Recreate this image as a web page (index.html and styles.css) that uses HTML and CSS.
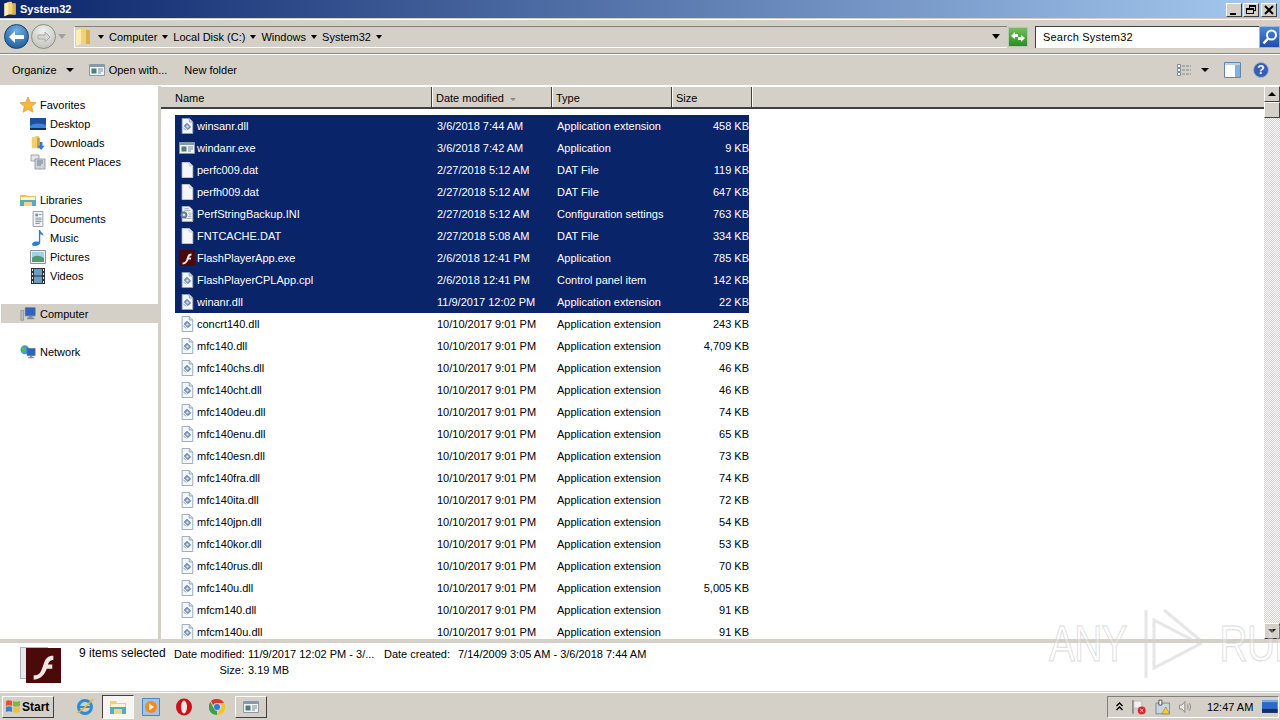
FILE: index.html
```html
<!DOCTYPE html>
<html lang="en">
<head>
  <meta charset="UTF-8">
  <title>System32</title>
  <link rel="stylesheet" href="styles.css">
</head>
<body>

  <svg class="defs" width="0" height="0">
    <symbol id="folder" viewBox="0 0 16 20">
      <path d="M1 3l6-2h3l1 2h4v14H5l-4 2z" fill="#f0d27a"/>
      <path d="M1 3l5-1v15l-5 2z" fill="#fbeeb0"/>
      <path d="M11 3h4v14h-4z" fill="#d9b04a"/>
    </symbol>
    <symbol id="dll" viewBox="0 0 16 18">
      <path d="M2.5.5h8l4 4v13h-12z" fill="#f4f7fb" stroke="#8fa0b4"/>
      <path d="M10.500.5v4h4" fill="#d5dde8" stroke="#8fa0b4"/>
      <path d="M5 9l3-3 4 4-3 3z" fill="#8aa4c8" stroke="#4c6a94"/>
      <circle cx="8.500" cy="9.500" r="1.200" fill="#e8eef6"/>
      <path d="M4 11l3 3" stroke="#6a86ac"/>
    </symbol>
    <symbol id="dat" viewBox="0 0 16 18">
      <path d="M2.500.5h8l4 4v13h-12z" fill="#f6f6f6" stroke="#c8ccd2"/>
      <path d="M10.500.5v4h4" fill="#dfe2e6" stroke="#c8ccd2"/>
    </symbol>
    <symbol id="exe" viewBox="0 0 16 14">
      <path d="M.5 1.500h15v11H.5z" fill="#f2f5f8" stroke="#8a98a6"/>
      <path d="M1 2h14v2H1z" fill="#7f9ab4"/>
      <path d="M2.500 5.500h5v5h-5z" fill="#4f7d78"/>
      <path d="M9 6h5M9 8h5M9 10h3" stroke="#7a8a98"/>
    </symbol>
    <symbol id="ini" viewBox="0 0 16 18">
      <path d="M2.500.5h8l4 4v13h-12z" fill="#f4f6f8" stroke="#aab2bc"/>
      <path d="M5 3h5M5 5h7M9 8h4M10 10h3M9 12h4M5 14h8" stroke="#9aa4b0"/>
      <circle cx="4.500" cy="10" r="3.500" fill="#7c8ea6" stroke="#56667c"/>
      <circle cx="4.500" cy="10" r="1.300" fill="#e6ebf1"/>
    </symbol>
    <symbol id="flash" viewBox="0 0 16 16">
      <path d="M0 0h16v16H0z" fill="#4b0a0a"/>
      <path d="M3.500 12.500c3 0 3.500-2 4.500-5s2-4 4.500-4v2c-1.500 0-2 1-2.500 2h2v2H9.500c-1 2.500-2.500 4.800-6 5z" fill="#f2e6e2"/>
    </symbol>
    <symbol id="star" viewBox="0 0 16 16">
      <path d="M8 0l2.300 5.300 5.700.5-4.300 3.800 1.300 5.600L8 12.300l-5 2.900 1.300-5.600L0 5.800l5.700-.5z" fill="#f6b73c" stroke="#d98a1e" stroke-width=".6"/>
    </symbol>
    <symbol id="desktop" viewBox="0 0 16 14">
      <path d="M0 1h16v12H0z" fill="#1d4f9c"/>
      <path d="M0 9c4-3 10-3 16-1v5H0z" fill="#3f86d8"/>
      <path d="M0 11h16v2H0z" fill="#16305e"/>
    </symbol>
    <symbol id="downloads" viewBox="0 0 16 18">
      <path d="M1 3l5-2h3v14H1z" fill="#f0cf6c"/>
      <path d="M7 3h3v12H7z" fill="#c99c36"/>
      <path d="M10 8h3v4h2.500l-4 5-4-5H10z" fill="#2f78d0"/>
    </symbol>
    <symbol id="recent" viewBox="0 0 16 16">
      <path d="M1 1h8v6H1z" fill="#e2e5e9" stroke="#8f979f" stroke-width=".8"/>
      <path d="M5 5h10v10H5z" fill="#cfd4da" stroke="#858d96" stroke-width=".8"/>
      <path d="M7 7h6M7 9h6M7 11h4" stroke="#6f7882"/>
    </symbol>
    <symbol id="libraries" viewBox="0 0 16 14">
      <path d="M0 2h6l1 1h9v10H0z" fill="#e6c35c"/>
      <path d="M1 4h14v3H1z" fill="#fbf4d0"/>
      <path d="M0 7h16v6H0z" fill="#58a8c8"/>
      <path d="M4 13V9h8v4" fill="#f2d678"/>
    </symbol>
    <symbol id="documents" viewBox="0 0 16 18">
      <path d="M2.500.5h11v17h-11z" fill="#f3f4f6" stroke="#8e959d"/>
      <path d="M5 3h3v3H5z" fill="#7f8b98"/>
      <path d="M9 4h3M5 8h7M5 10h7M5 12h7M5 14h5" stroke="#838b94"/>
    </symbol>
    <symbol id="music" viewBox="0 0 16 18">
      <path d="M9 0h1.500c.5 3 4 3.500 3.500 7-.8-1.500-2-2-3.500-2.200V14c0 2.500-3 4-6 4-3 0-4-2-2.500-3.500 1.500-1.500 4-2 7-1.200z" fill="#2c7fd2"/>
    </symbol>
    <symbol id="pictures" viewBox="0 0 16 14">
      <path d="M.5.500h15v13H.5z" fill="#eef1f4" stroke="#8a929a"/>
      <path d="M2 2h12v7H2z" fill="#a6cfe6"/>
      <path d="M2 8c3-3 7-3 12 0v4H2z" fill="#4e9a72"/>
    </symbol>
    <symbol id="videos" viewBox="0 0 14 16">
      <path d="M0 0h14v16H0z" fill="#2a3138"/>
      <path d="M3 1h8v6.500H3zM3 8.500h8V15H3z" fill="#6a9bc2"/>
      <path d="M1 1h1v2H1zM1 5h1v2H1zM1 9h1v2H1zM1 13h1v2H1zM12 1h1v2h-1zM12 5h1v2h-1zM12 9h1v2h-1zM12 13h1v2h-1z" fill="#e6eaee"/>
    </symbol>
    <symbol id="computer" viewBox="0 0 18 16">
      <path d="M6 1h11v9H6z" fill="#2a62c8" stroke="#5c6a78" stroke-width=".8"/>
      <path d="M10 10h4v2h2v2H8v-2h2z" fill="#7f8b98"/>
      <path d="M1 4h3v11H1z" fill="#b8c0c8" stroke="#6c7680" stroke-width=".6"/>
    </symbol>
    <symbol id="network" viewBox="0 0 18 16">
      <circle cx="5.500" cy="5.500" r="5" fill="#3aa0c8"/>
      <path d="M2 3c2-1 3 0 4 2s-1 3-3 3z" fill="#5cb85c"/>
      <path d="M8 4h9v8H8z" fill="#2a62c8" stroke="#5c6a78" stroke-width=".7"/>
      <path d="M11 12h3v2h2v1H9v-1h2z" fill="#7f8b98"/>
    </symbol>
  </svg>

  <div class="window">
    <div class="title-bar">
      <svg class="title-icon"><use href="#folder"/></svg>
      <span class="title-text">System32</span>
      <div class="win-buttons">
        <button class="win-btn"><svg width="12" height="12" viewBox="0 0 12 12"><path d="M2 9h6v2H2z" fill="#000"/></svg></button>
        <button class="win-btn"><svg width="12" height="12" viewBox="0 0 12 12"><path d="M4 1h7v6H9v3H1V4h3zm1 2v1h4v2h1V3zM2 6v3h6V6z" fill="#000"/></svg></button>
        <button class="win-btn win-btn-close"><svg width="12" height="12" viewBox="0 0 12 12"><path d="M2 2l8 8M10 2l-8 8" stroke="#000" stroke-width="2"/></svg></button>
      </div>
    </div>

    <div class="address-bar">
      <div class="nav-buttons">
        <button class="nav-btn nav-back"><svg width="18" height="14" viewBox="0 0 18 14"><path d="M1 7l6-6v4h9v4H7v4z" fill="#fff"/></svg></button>
        <button class="nav-btn nav-forward"><svg width="14" height="12" viewBox="0 0 14 12"><path d="M13 6L8 1v3H1v4h7v3z" fill="#d6d6d6" stroke="#a8a8a8"/></svg></button>
        <span class="nav-drop"></span>
      </div>
      <div class="breadcrumb">
        <svg class="crumb-folder"><use href="#folder"/></svg>
        <span class="crumb-arrow"></span><span class="crumb">Computer</span>
        <span class="crumb-arrow"></span><span class="crumb">Local Disk (C:)</span>
        <span class="crumb-arrow"></span><span class="crumb">Windows</span>
        <span class="crumb-arrow"></span><span class="crumb">System32</span>
        <span class="crumb-arrow"></span>
        <span class="breadcrumb-drop"></span>
      </div>
      <span class="refresh"><svg width="16" height="14" viewBox="0 0 16 14"><path d="M1 6l4-4v2h3v3H5v2zM15 8l-4 4v-2H8V7h3V5z" fill="#fff"/></svg></span>
      <div class="search">
        <span class="search-box">Search System32</span>
        <span class="search-btn"><svg width="18" height="18" viewBox="0 0 18 18"><circle cx="10.500" cy="7" r="4.500" fill="none" stroke="#fff" stroke-width="2"/><path d="M7 10.500l-4.500 5" stroke="#fff" stroke-width="2.500"/></svg></span>
      </div>
    </div>

    <div class="command-bar">
      <span class="cmd">Organize</span><span class="cmd-arrow"></span>
      <svg class="cmd-icon"><use href="#exe"/></svg>
      <span class="cmd">Open with...</span>
      <span class="cmd cmd-new">New folder</span>
      <div class="cmd-right">
        <svg width="16" height="14" viewBox="0 0 16 14"><path d="M1.500 1.500h3v3h-3zM1.500 5.500h3v3h-3zM1.500 9.500h3v3h-3z" fill="#fff" stroke="#7d8790"/><path d="M6 3h9M6 7h9M6 11h9" stroke="#7d8790" stroke-dasharray="3 1"/></svg>
        <span class="cmd-arrow cmd-arrow-views"></span>
        <svg class="pane-icon" width="17" height="16" viewBox="0 0 17 16"><path d="M.5.500h16v15H.5z" fill="#fff" stroke="#5f87ad"/><path d="M11 1h5v14h-5z" fill="#7fb2dc"/><path d="M1 1h15v2H1z" fill="#b9d2e8"/></svg>
        <svg width="16" height="16" viewBox="0 0 16 16"><circle cx="8" cy="8" r="7.500" fill="#3a5cb8" stroke="#9fb0d8"/><text class="help-mark" x="8" y="12" text-anchor="middle">?</text></svg>
      </div>
    </div>

    <div class="main">
      <nav class="sidebar">
        <div class="nav-group">
          <div class="nav-item nav-head"><svg class="side-icon"><use href="#star"/></svg>Favorites</div>
          <div class="nav-item"><svg class="side-icon"><use href="#desktop"/></svg>Desktop</div>
          <div class="nav-item"><svg class="side-icon"><use href="#downloads"/></svg>Downloads</div>
          <div class="nav-item"><svg class="side-icon"><use href="#recent"/></svg>Recent Places</div>
        </div>
        <div class="nav-group">
          <div class="nav-item nav-head"><svg class="side-icon"><use href="#libraries"/></svg>Libraries</div>
          <div class="nav-item"><svg class="side-icon"><use href="#documents"/></svg>Documents</div>
          <div class="nav-item"><svg class="side-icon"><use href="#music"/></svg>Music</div>
          <div class="nav-item"><svg class="side-icon"><use href="#pictures"/></svg>Pictures</div>
          <div class="nav-item"><svg class="side-icon"><use href="#videos"/></svg>Videos</div>
        </div>
        <div class="nav-group">
          <div class="nav-item nav-head nav-active"><svg class="side-icon"><use href="#computer"/></svg>Computer</div>
        </div>
        <div class="nav-group">
          <div class="nav-item nav-head"><svg class="side-icon"><use href="#network"/></svg>Network</div>
        </div>
      </nav>

      <section class="files">
        <div class="col-header">
          <div class="col col-name">Name</div>
          <div class="col col-date">Date modified<span class="sort-arrow"></span></div>
          <div class="col col-type">Type</div>
          <div class="col col-size">Size</div>
          <div class="col-rest"></div>
        </div>
        <div class="rows">
          <div class="row selected"><svg class="file-icon"><use href="#dll"/></svg><span class="c-name">winsanr.dll</span><span class="c-date">3/6/2018 7:44 AM</span><span class="c-type">Application extension</span><span class="c-size">458 KB</span></div>
          <div class="row selected"><svg class="file-icon"><use href="#exe"/></svg><span class="c-name">windanr.exe</span><span class="c-date">3/6/2018 7:42 AM</span><span class="c-type">Application</span><span class="c-size">9 KB</span></div>
          <div class="row selected"><svg class="file-icon"><use href="#dat"/></svg><span class="c-name">perfc009.dat</span><span class="c-date">2/27/2018 5:12 AM</span><span class="c-type">DAT File</span><span class="c-size">119 KB</span></div>
          <div class="row selected"><svg class="file-icon"><use href="#dat"/></svg><span class="c-name">perfh009.dat</span><span class="c-date">2/27/2018 5:12 AM</span><span class="c-type">DAT File</span><span class="c-size">647 KB</span></div>
          <div class="row selected"><svg class="file-icon"><use href="#ini"/></svg><span class="c-name">PerfStringBackup.INI</span><span class="c-date">2/27/2018 5:12 AM</span><span class="c-type">Configuration settings</span><span class="c-size">763 KB</span></div>
          <div class="row selected"><svg class="file-icon"><use href="#dat"/></svg><span class="c-name">FNTCACHE.DAT</span><span class="c-date">2/27/2018 5:08 AM</span><span class="c-type">DAT File</span><span class="c-size">334 KB</span></div>
          <div class="row selected"><svg class="file-icon"><use href="#flash"/></svg><span class="c-name">FlashPlayerApp.exe</span><span class="c-date">2/6/2018 12:41 PM</span><span class="c-type">Application</span><span class="c-size">785 KB</span></div>
          <div class="row selected"><svg class="file-icon"><use href="#dll"/></svg><span class="c-name">FlashPlayerCPLApp.cpl</span><span class="c-date">2/6/2018 12:41 PM</span><span class="c-type">Control panel item</span><span class="c-size">142 KB</span></div>
          <div class="row selected"><svg class="file-icon"><use href="#dll"/></svg><span class="c-name">winanr.dll</span><span class="c-date">11/9/2017 12:02 PM</span><span class="c-type">Application extension</span><span class="c-size">22 KB</span></div>
          <div class="row"><svg class="file-icon"><use href="#dll"/></svg><span class="c-name">concrt140.dll</span><span class="c-date">10/10/2017 9:01 PM</span><span class="c-type">Application extension</span><span class="c-size">243 KB</span></div>
          <div class="row"><svg class="file-icon"><use href="#dll"/></svg><span class="c-name">mfc140.dll</span><span class="c-date">10/10/2017 9:01 PM</span><span class="c-type">Application extension</span><span class="c-size">4,709 KB</span></div>
          <div class="row"><svg class="file-icon"><use href="#dll"/></svg><span class="c-name">mfc140chs.dll</span><span class="c-date">10/10/2017 9:01 PM</span><span class="c-type">Application extension</span><span class="c-size">46 KB</span></div>
          <div class="row"><svg class="file-icon"><use href="#dll"/></svg><span class="c-name">mfc140cht.dll</span><span class="c-date">10/10/2017 9:01 PM</span><span class="c-type">Application extension</span><span class="c-size">46 KB</span></div>
          <div class="row"><svg class="file-icon"><use href="#dll"/></svg><span class="c-name">mfc140deu.dll</span><span class="c-date">10/10/2017 9:01 PM</span><span class="c-type">Application extension</span><span class="c-size">74 KB</span></div>
          <div class="row"><svg class="file-icon"><use href="#dll"/></svg><span class="c-name">mfc140enu.dll</span><span class="c-date">10/10/2017 9:01 PM</span><span class="c-type">Application extension</span><span class="c-size">65 KB</span></div>
          <div class="row"><svg class="file-icon"><use href="#dll"/></svg><span class="c-name">mfc140esn.dll</span><span class="c-date">10/10/2017 9:01 PM</span><span class="c-type">Application extension</span><span class="c-size">73 KB</span></div>
          <div class="row"><svg class="file-icon"><use href="#dll"/></svg><span class="c-name">mfc140fra.dll</span><span class="c-date">10/10/2017 9:01 PM</span><span class="c-type">Application extension</span><span class="c-size">74 KB</span></div>
          <div class="row"><svg class="file-icon"><use href="#dll"/></svg><span class="c-name">mfc140ita.dll</span><span class="c-date">10/10/2017 9:01 PM</span><span class="c-type">Application extension</span><span class="c-size">72 KB</span></div>
          <div class="row"><svg class="file-icon"><use href="#dll"/></svg><span class="c-name">mfc140jpn.dll</span><span class="c-date">10/10/2017 9:01 PM</span><span class="c-type">Application extension</span><span class="c-size">54 KB</span></div>
          <div class="row"><svg class="file-icon"><use href="#dll"/></svg><span class="c-name">mfc140kor.dll</span><span class="c-date">10/10/2017 9:01 PM</span><span class="c-type">Application extension</span><span class="c-size">53 KB</span></div>
          <div class="row"><svg class="file-icon"><use href="#dll"/></svg><span class="c-name">mfc140rus.dll</span><span class="c-date">10/10/2017 9:01 PM</span><span class="c-type">Application extension</span><span class="c-size">70 KB</span></div>
          <div class="row"><svg class="file-icon"><use href="#dll"/></svg><span class="c-name">mfc140u.dll</span><span class="c-date">10/10/2017 9:01 PM</span><span class="c-type">Application extension</span><span class="c-size">5,005 KB</span></div>
          <div class="row"><svg class="file-icon"><use href="#dll"/></svg><span class="c-name">mfcm140.dll</span><span class="c-date">10/10/2017 9:01 PM</span><span class="c-type">Application extension</span><span class="c-size">91 KB</span></div>
          <div class="row"><svg class="file-icon"><use href="#dll"/></svg><span class="c-name">mfcm140u.dll</span><span class="c-date">10/10/2017 9:01 PM</span><span class="c-type">Application extension</span><span class="c-size">91 KB</span></div>
        </div>
      </section>

      <div class="scrollbar">
        <button class="scroll-btn"><span class="arrow-up"></span></button>
        <div class="scroll-thumb"></div>
        <div class="scroll-track"></div>
        <button class="scroll-btn"><span class="arrow-down"></span></button>
      </div>
    </div>

    <div class="details">
      <div class="details-thumb">
        <div class="thumb-back"></div>
        <svg class="thumb-flash"><use href="#flash"/></svg>
      </div>
      <div class="details-count">9 items selected</div>
      <div class="details-grid">
        <span class="d-label">Date modified:</span><span>11/9/2017 12:02 PM - 3/...</span>
        <span class="d-label d-label-2">Date created:</span><span>7/14/2009 3:05 AM - 3/6/2018 7:44 AM</span>
        <span class="d-label">Size:</span><span>3.19 MB</span>
      </div>
    </div>
  </div>

  <div class="taskbar">
    <button class="start">
      <svg width="16" height="15" viewBox="0 0 16 15"><path d="M1 2c2-1 4-1 6 0v5C5 6 3 6 1 7z" fill="#e0562c"/><path d="M8 2c2 1 4 1 7 0v5c-3 1-5 1-7 0z" fill="#7cb83c"/><path d="M1 8c2-1 4-1 6 0v5c-2-1-4-1-6 0z" fill="#3a80d0"/><path d="M8 8c2 1 4 1 7 0v5c-3 1-5 1-7 0z" fill="#f0c030"/></svg>
      Start
    </button>
    <div class="task-icons">
      <span class="task"><svg width="18" height="18" viewBox="0 0 18 18"><circle cx="9" cy="9" r="6.500" fill="none" stroke="#2c8ad8" stroke-width="3"/><path d="M3 9h12" stroke="#2c8ad8" stroke-width="2"/><path d="M1 15C4 14 13 6 17 1" fill="none" stroke="#e8b830" stroke-width="1.500"/></svg></span>
      <span class="task task-active"><svg width="18" height="16" viewBox="0 0 18 16"><path d="M1 2h6l1 2h9v11H1z" fill="#ecd072"/><path d="M2 5h14v3H2z" fill="#fbf4d0"/><path d="M1 8h16v7H1z" fill="#58a8c8"/><path d="M5 15v-5h8v5" fill="#f2d678"/></svg></span>
      <span class="task"><svg width="18" height="18" viewBox="0 0 18 18"><path d="M.5.500h17v17H.5z" fill="#9fc4e8" stroke="#4a86c4"/><circle cx="9" cy="9" r="6" fill="#f08c1c"/><path d="M7 5.500l5 3.500-5 3.500z" fill="#fff"/></svg></span>
      <span class="task"><svg width="18" height="18" viewBox="0 0 18 18"><ellipse cx="9" cy="9" rx="8" ry="8.500" fill="#cc1016"/><ellipse cx="9" cy="9" rx="3" ry="6.500" fill="#f6e6e6"/></svg></span>
      <span class="task"><svg width="16" height="16" viewBox="0 0 16 16"><path d="M8 0a8 8 0 0 1 7 4H8a4 4 0 0 0-4 2L2 2a8 8 0 0 1 6-2z" fill="#d8372c"/><path d="M15 4a8 8 0 0 1-7 12l3-5a4 4 0 0 0 0-7z" fill="#f4c420"/><path d="M1.500 3l3.500 7a4 4 0 0 0 3 2L8 16A8 8 0 0 1 1.500 3z" fill="#3ca04c"/><circle cx="8" cy="8" r="3" fill="#3a78d8"/></svg></span>
      <span class="task-app"><svg width="16" height="14"><use href="#exe"/></svg></span>
    </div>
    <div class="tray">
      <span class="tray-up"><svg width="7" height="9" viewBox="0 0 7 9"><path d="M.5 4l3-3 3 3M.5 8l3-3 3 3" fill="none" stroke="#000" stroke-width="1.300"/></svg></span>
      <svg width="16" height="16" viewBox="0 0 16 16"><path d="M2 1v14" stroke="#555"/><path d="M3 2h8v7H3z" fill="#f2f2f2" stroke="#aaa" stroke-width=".6"/><circle cx="11" cy="11.500" r="4" fill="#d8262c"/><path d="M9.500 10l3 3M12.500 10l-3 3" stroke="#fff"/></svg>
      <svg width="16" height="16" viewBox="0 0 16 16"><path d="M1 4h14v11H1z" fill="#c8d4de" stroke="#5c6a76" stroke-width=".7"/><path d="M4 1h3v5H4z" fill="#fff" stroke="#333" stroke-width=".8"/><path d="M11 8l4 7H7z" fill="#f4cf2c" stroke="#8a7010" stroke-width=".5"/></svg>
      <svg width="16" height="16" viewBox="0 0 16 16"><path d="M1.500 6h2.500l3-3.500v11L4 10H1.500z" fill="#eceae6" stroke="#8a8a86"/><path d="M9.500 5.500c1 1.500 1 3.500 0 5M11.500 4c1.700 2.500 1.700 5.500 0 8" fill="none" stroke="#8a8a86"/></svg>
      <span class="clock">12:47 AM</span>
      <svg width="16" height="13" viewBox="0 0 16 13"><path d="M0 0h16v13H0z" fill="#2a6ac8"/><path d="M0 9h16v4H0z" fill="#16305e"/><path d="M0 0h16v2H0z" fill="#7db0e6"/></svg>
    </div>
  </div>

  <div class="watermark">
    <span class="wm-text">ANY</span>
    <svg width="62" height="72" viewBox="0 0 62 72"><path d="M4 2v68M12 12l46 24-46 24zM22 2l36 30" fill="none" stroke="#d6d6d6" stroke-width="3" opacity=".8"/></svg>
    <span class="wm-text">RUN</span>
  </div>

</body>
</html>
```

FILE: styles.css
```css
* {
  box-sizing: border-box;
}

html, body {
  margin: 0;
  padding: 0;
  height: 720px;
  overflow: hidden;
}

body {
  font-family: "Liberation Sans", Arial, sans-serif;
  font-size: 11px;
  color: #000;
  background-color: #d4d0c8;
  position: relative;
}

button {
  font: inherit;
  padding: 0;
  cursor: default;
}

.defs {
  position: absolute;
}

.window {
  height: 692px;
  display: flex;
  flex-direction: column;
}

/* title bar */
.title-bar {
  height: 19px;
  flex: none;
  display: flex;
  align-items: center;
  padding: 0 3px;
  background: linear-gradient(to right, #0a246a, #a6caf0);
  border-bottom: 1px solid #d4d0c8;
}

.title-icon {
  width: 14px;
  height: 16px;
}

.title-text {
  margin-left: 3px;
  color: #fff;
  font-weight: bold;
}

.win-buttons {
  margin-left: auto;
  display: flex;
  gap: 1px;
}

.win-btn {
  width: 16px;
  height: 14px;
  margin-top: 1px;
  display: flex;
  align-items: center;
  justify-content: center;
  background-color: #d4d0c8;
  border: 1px solid;
  border-color: #fff #404040 #404040 #fff;
}

.win-btn-close {
  margin-left: 1px;
}

/* address bar */
.address-bar {
  height: 35px;
  flex: none;
  display: flex;
  align-items: center;
  padding: 0 0 0 4px;
  background-color: #d4d0c8;
  border-top: 1px solid #fff;
  border-bottom: 1px solid #888;
}

.nav-buttons {
  display: flex;
  align-items: center;
  width: 70px;
  flex: none;
}

.nav-btn {
  width: 25px;
  height: 25px;
  border-radius: 50%;
  display: flex;
  align-items: center;
  justify-content: center;
}

.nav-back {
  background: radial-gradient(circle at 50% 25%, #6fb0e4, #14508f);
  border: 1px solid #16406e;
}

.nav-forward {
  margin-left: 2px;
  background: radial-gradient(circle at 50% 30%, #f2f2f0, #b8b8b4);
  border: 1px solid #8c8c88;
}

.nav-drop {
  width: 0;
  height: 0;
  margin-left: 2px;
  border: 4px solid transparent;
  border-top: 5px solid #a0a0a0;
  border-bottom: 0;
}

.breadcrumb {
  flex: 1;
  height: 22px;
  display: flex;
  align-items: center;
  margin-right: 0;
  background-color: #d4d0c8;
  border-top: 1px solid #808080;
  border-left: 1px solid #fff;
  border-bottom: 1px solid #fff;
}

.crumb-folder {
  width: 16px;
  height: 20px;
  margin-left: 0;
}

.crumb-arrow {
  width: 0;
  height: 0;
  margin: 0 5px 0 5px;
  border: 3px solid transparent;
  border-top: 4px solid #000;
  border-bottom: 0;
}

.crumb:first-of-type {
  margin-left: 0;
}

.crumb-folder + .crumb-arrow {
  margin-left: 7px;
}

.breadcrumb-drop {
  width: 0;
  height: 0;
  margin-left: auto;
  margin-right: 7px;
  border: 4px solid transparent;
  border-top: 5px solid #000;
  border-bottom: 0;
}

.refresh {
  width: 20px;
  height: 20px;
  flex: none;
  margin-left: 1px;
  margin-right: 7px;
  display: flex;
  align-items: center;
  justify-content: center;
  background: linear-gradient(#6fc05c, #2d8a26);
  border: 1px solid #b8c8b0;
}

.search {
  width: 245px;
  flex: none;
  height: 22px;
  display: flex;
  margin-right: 0;
}

.search-box {
  flex: 1;
  padding: 3px 0 0 7px;
  font-size: 11px;
  line-height: 14px;
  background-color: #fff;
  border-top: 1px solid #404040;
  border-left: 1px solid #404040;
  letter-spacing: .2px;
}

.search-btn {
  width: 21px;
  display: flex;
  align-items: center;
  justify-content: center;
  background: linear-gradient(#4a86d8, #1d4fa8);
  border: 1px solid #9bb8dc;
}

/* command bar */
.command-bar {
  height: 31px;
  flex: none;
  display: flex;
  align-items: center;
  padding: 0 11px 0 12px;
  background-color: #d4d0c8;
  border-top: 1px solid #fff;
}

.cmd-arrow {
  width: 0;
  height: 0;
  margin-left: 9px;
  border: 4px solid transparent;
  border-top: 4px solid #000;
  border-bottom: 0;
}

.cmd-icon {
  width: 16px;
  height: 14px;
  margin: 0 4px 0 15px;
}

.cmd-new {
  margin-left: 17px;
}

.cmd-right {
  margin-left: auto;
  display: flex;
  align-items: center;
}

.cmd-arrow-views {
  margin: 0 15px 0 9px;
}

.pane-icon {
  margin-right: 12px;
}

.help-mark {
  font-size: 12px;
  font-weight: bold;
  fill: #fff;
}

/* main area */
.main {
  flex: 1;
  min-height: 0;
  display: flex;
  background-color: #fff;
  border-top: 1px solid #fff;
}

.sidebar {
  width: 158px;
  flex: none;
  padding: 9px 0 0 1px;
  background-color: #fff;
  border-right: 0;
}

.nav-group {
  margin-bottom: 19px;
}

.nav-item {
  height: 19px;
  display: flex;
  align-items: center;
  padding-left: 29px;
  white-space: nowrap;
}

.nav-head {
  padding-left: 19px;
}

.nav-active {
  background-color: #d4d0c8;
}

.side-icon {
  width: 16px;
  height: 16px;
  margin-right: 4px;
  flex: none;
}

.files {
  flex: 1;
  min-width: 0;
  display: flex;
  flex-direction: column;
  border-left: 3px solid #d4d0c8;
  margin-left: -1px;
  margin-left: 0;
  overflow: hidden;
}

.col-header {
  height: 23px;
  flex: none;
  display: flex;
  background-color: #d4d0c8;
  border-top: 1px solid #fff;
  border-bottom: 2px solid #404040;
}

.col {
  padding: 5px 0 0 4px;
  border-right: 1px solid #404040;
  box-shadow: 1px 0 0 #fff;
}

.col-name {
  width: 271px;
  padding-left: 14px;
}

.col-date {
  width: 120px;
}

.col-type {
  width: 120px;
}

.col-size {
  width: 80px;
}

.col-rest {
  flex: 1;
}

.sort-arrow {
  display: inline-block;
  vertical-align: middle;
  width: 0;
  height: 0;
  margin-left: 6px;
  border: 3px solid transparent;
  border-top: 3px solid #8a8a86;
  border-bottom: 0;
}

.rows {
  padding: 6px 0 0 14px;
}

.row {
  width: 574px;
  height: 22px;
  display: flex;
  align-items: center;
  color: #000;
}

.row.selected {
  background-color: #0a246a;
  color: #fff;
}

.file-icon {
  width: 16px;
  height: 16px;
  margin-left: 4px;
  flex: none;
}

.c-name {
  width: 240px;
  margin-left: 2px;
}

.c-date {
  width: 120px;
}

.c-type {
  width: 120px;
}

.c-size {
  width: 72px;
  text-align: right;
}

.scrollbar {
  width: 16px;
  flex: none;
  display: flex;
  flex-direction: column;
  background-color: #fff;
}

.scroll-btn {
  width: 16px;
  height: 16px;
  flex: none;
  display: flex;
  align-items: center;
  justify-content: center;
  background-color: #d4d0c8;
  border: 1px solid;
  border-color: #fff #404040 #404040 #fff;
}

.scroll-thumb {
  height: 16px;
  flex: none;
  background-color: #d4d0c8;
  border: 1px solid;
  border-color: #fff #404040 #404040 #fff;
}

.scroll-track {
  flex: 1;
  background-color: #f1efe9;
  background-image: repeating-conic-gradient(#d4d0c8 0 25%, #fff 0 50%);
  background-size: 2px 2px;
}

.arrow-up,
.arrow-down {
  width: 0;
  height: 0;
  border: 4px solid transparent;
}

.arrow-up {
  border-bottom: 4px solid #000;
  border-top: 0;
}

.arrow-down {
  border-top: 4px solid #000;
  border-bottom: 0;
}

/* details pane */
.details {
  height: 53px;
  flex: none;
  display: flex;
  background-color: #fff;
  border-top: 4px solid #d4d0c8;
  border-bottom: 1px solid #d4d0c8;
}

.details-thumb {
  width: 79px;
  flex: none;
  position: relative;
}

.thumb-back {
  position: absolute;
  left: 20px;
  top: 4px;
  width: 28px;
  height: 32px;
  background-color: #e6e8ec;
  border: 1px solid #b0b4ba;
}

.thumb-flash {
  position: absolute;
  left: 26px;
  top: 5px;
  width: 35px;
  height: 35px;
}

.details-count {
  width: 95px;
  flex: none;
  padding-top: 3px;
  font-size: 12px;
  white-space: nowrap;
}

.details-grid {
  display: grid;
  grid-template-columns: 74px 136px 74px auto;
  column-gap: 0;
  row-gap: 4px;
  padding-top: 5px;
  align-content: start;
}

.d-label {
  white-space: nowrap;
}

.d-label:nth-of-type(5) {
  text-align: right;
  padding-right: 4px;
}

/* taskbar */
.taskbar {
  height: 28px;
  display: flex;
  align-items: center;
  background-color: #d4d0c8;
  border-top: 1px solid #fff;
}

.start {
  width: 52px;
  height: 22px;
  margin-left: 2px;
  display: flex;
  align-items: center;
  gap: 1px;
  padding-left: 2px;
  font-weight: bold;
  font-size: 12px;
  background-color: #d4d0c8;
  border: 1px solid;
  border-color: #fff #404040 #404040 #fff;
}

.task-icons {
  display: flex;
  align-items: center;
  margin-left: 15px;
}

.task {
  width: 32px;
  height: 24px;
  margin-right: 1px;
  display: flex;
  align-items: center;
  justify-content: center;
}

.task-active {
  background-color: #f6f5f2;
  border: 1px solid;
  border-color: #404040 #fff #fff #404040;
}

.task-app {
  width: 32px;
  height: 22px;
  margin-left: 1px;
  display: flex;
  align-items: center;
  justify-content: center;
  border: 1px solid;
  border-color: #fff #404040 #404040 #fff;
}

.tray {
  margin-left: auto;
  margin-right: 1px;
  width: 172px;
  height: 22px;
  display: flex;
  align-items: center;
  gap: 8px;
  padding-left: 8px;
  border: 1px solid;
  border-color: #808080 #fff #fff #808080;
}

.clock {
  margin-left: 5px;
  margin-right: 1px;
  white-space: nowrap;
}

/* any.run mark */
.watermark {
  position: absolute;
  left: 1038px;
  top: 608px;
  display: flex;
  align-items: center;
  gap: 4px;
  opacity: .75;
  pointer-events: none;
}

.wm-text {
  font-size: 50px;
  line-height: 60px;
  letter-spacing: -1px;
  color: rgba(255, 255, 255, .4);
  -webkit-text-stroke: 1px #cfcfcf;
  transform: scaleX(.78);
}
```
